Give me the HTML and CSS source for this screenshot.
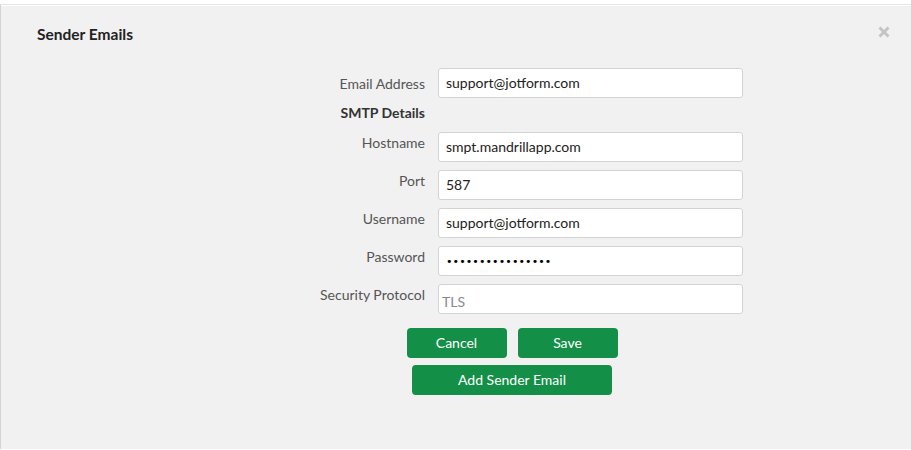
FILE: index.html
```html
<!DOCTYPE html>
<html>
<head>
<meta charset="utf-8">
<link rel="stylesheet" href="styles.css">
</head>
<body>
<div class="frame">
  <div class="modal">
    <div class="header">
      <h1 class="title">Sender Emails</h1>
      <svg class="close" width="12" height="12" viewBox="0 0 12 12" aria-label="Close">
        <path d="M1.5 1.5 L10.5 10.5 M10.5 1.5 L1.5 10.5" stroke="#c4c4c4" stroke-width="3" stroke-linecap="butt"/>
      </svg>
    </div>
    <form class="form">
      <div class="row">
        <label class="label first">Email Address</label>
        <div class="field">support@jotform.com</div>
      </div>
      <div class="row section">
        <span class="label bold">SMTP Details</span>
      </div>
      <div class="row">
        <label class="label">Hostname</label>
        <div class="field">smpt.mandrillapp.com</div>
      </div>
      <div class="row">
        <label class="label">Port</label>
        <div class="field">587</div>
      </div>
      <div class="row">
        <label class="label">Username</label>
        <div class="field">support@jotform.com</div>
      </div>
      <div class="row">
        <label class="label">Password</label>
        <div class="field dots">&#8226;&#8226;&#8226;&#8226;&#8226;&#8226;&#8226;&#8226;&#8226;&#8226;&#8226;&#8226;&#8226;&#8226;&#8226;&#8226;</div>
      </div>
      <div class="row">
        <label class="label">Security Protocol</label>
        <div class="field placeholder">TLS</div>
      </div>
      <div class="actions">
        <div class="pair">
          <button type="button" class="btn">Cancel</button>
          <button type="button" class="btn">Save</button>
        </div>
        <button type="button" class="btn wide">Add Sender Email</button>
      </div>
    </form>
  </div>
</div>
</body>
</html>
```
FILE: styles.css
```css
html, body {
  margin: 0;
  padding: 0;
  background: #ffffff;
}
body {
  font-family: "Lato", "Liberation Sans", sans-serif;
  width: 911px;
  height: 450px;
  overflow: hidden;
}
.frame {
  padding-top: 4px;
}
.modal {
  border-top: 1px solid #e4e4e4;
  border-left: 1px solid #d4d4d4;
  background: #f1f1f1;
  box-shadow: inset 0 1px 0 #ffffff;
  height: 445px;
  box-sizing: border-box;
}
.header {
  display: flex;
  justify-content: space-between;
  align-items: center;
  padding: 22px 21px 0 36px;
  height: 36px;
  box-sizing: border-box;
}
.title {
  margin: 0;
  font-size: 15.5px;
  font-weight: 700;
  color: #222;
}
.close {
  display: block;
  margin-top: -5px;
}
.form {
  margin: 27px 0 0 0;
  display: flex;
  flex-direction: column;
}
.row {
  display: flex;
  gap: 13px;
  margin-bottom: 8px;
}
.row.section {
  height: 26px;
  margin-bottom: 0;
}
.label {
  width: 424px;
  text-align: right;
  font-size: 14px;
  color: #555;
  padding-top: 2px;
  flex: none;
}
.label.first {
  padding-top: 7px;
}
.label.bold {
  font-weight: 700;
  color: #333;
  padding-top: 0;
  margin-top: -2px;
}
.field {
  width: 305px;
  height: 30px;
  box-sizing: border-box;
  background: #fff;
  border: 1px solid #d3d3d3;
  border-radius: 3px;
  font-size: 14px;
  color: #222;
  padding: 5px 7px 7px;
  line-height: 17px;
}
.field.dots {
  font-family: "DejaVu Sans", sans-serif;
  font-size: 11px;
  letter-spacing: 0.1px;
  color: #000;
  padding-top: 6px;
}
.field.placeholder {
  color: #8a8a8a;
  padding: 8px 3px 6px;
}
.actions {
  margin-top: 6px;
  display: flex;
  flex-direction: column;
  align-items: center;
  gap: 7px;
  padding-left: 112px;
}
.pair {
  display: flex;
  gap: 11px;
}
.btn {
  width: 100px;
  height: 30px;
  border: none;
  border-radius: 4px;
  background: #138f48;
  color: #fff;
  font-family: "Lato", "Liberation Sans", sans-serif;
  font-size: 14px;
  padding: 0 0 2px;
}
.btn.wide {
  width: 200px;
}
```
